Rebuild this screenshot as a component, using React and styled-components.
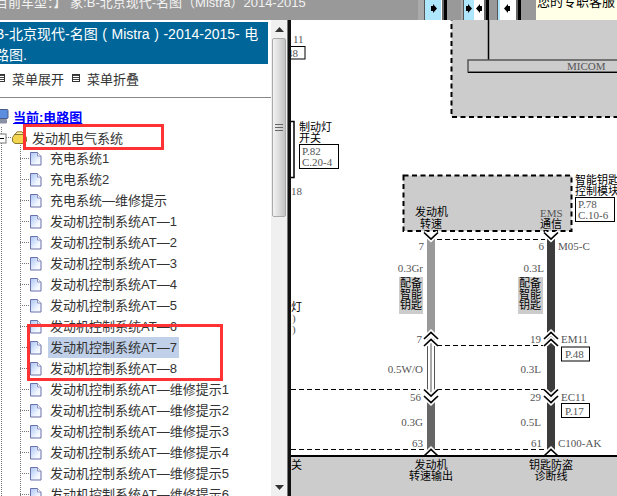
import React from 'react';
import styled, { createGlobalStyle } from 'styled-components';

const GlobalStyle = createGlobalStyle`
  html, body {
    margin: 0;
    padding: 0;
    height: 100%;
    overflow: hidden;
    background: #fff;
  }
  #root { height: 100%; }
`;

const Page = styled.div`
  display: flex;
  flex-direction: column;
  width: 617px;
  height: 496px;
  overflow: hidden;
  font-family: "Liberation Sans", "Noto Sans CJK SC", sans-serif;
`;

const TopBar = styled.div`
  display: flex;
  flex: 0 0 20px;
  height: 20px;
  background: #999;
  overflow: hidden;
`;

const CarInfo = styled.div`
  flex: 0 0 418px;
  height: 20px;
  box-sizing: border-box;
  margin-top: -7px;
  text-indent: -5px;
  font-size: 13px;
  line-height: 20px;
  color: #f2f2f2;
  white-space: nowrap;
`;

const ToolButton = styled.div`
  display: flex;
  flex: 0 0 auto;
  height: 20px;
  margin-left: ${p => p.$gap}px;
  padding-left: ${p => p.$pad}px;
  border-right: 3px solid #000;
  background: #aaa;
`;

const ToolFace = styled.div`
  display: flex;
  align-items: center;
  justify-content: space-around;
  width: ${p => p.$w}px;
  height: 20px;
  padding-bottom: 4px;
  box-sizing: border-box;
  border-left: 1px solid #555;
  border-right: 2px solid #666;
  background: linear-gradient(90deg, #aee6fb ${p => p.$blue}px, #fff ${p => p.$blue}px);
`;

const Service = styled.div`
  flex: 1;
  margin-left: 15px;
  padding-left: 1px;
  background: #ffffe8;
  color: #000;
  font-size: 13px;
  line-height: 14px;
  white-space: nowrap;
  overflow: hidden;
  span { display: block; margin-top: -5px; }
`;

const Body = styled.div`
  display: flex;
  flex: 1;
  min-height: 0;
`;

const Sidebar = styled.div`
  position: relative;
  flex: 0 0 271px;
  padding-top: 2px;
  overflow: hidden;
  background: #fff;
  color: #333;
  font-size: 13px;
`;

const Heading = styled.div`
  width: 268px;
  height: 42px;
  box-sizing: border-box;
  padding-top: 2px;
  overflow: hidden;
  background: #006699;
  color: #fff;
  font-size: 14px;
  line-height: 21px;
  word-spacing: 0.7px;
  white-space: nowrap;
`;

const HeadingText = styled.div`
  margin-left: -5px;
`;

const MenuRow = styled.div`
  display: flex;
  align-items: center;
  height: 34px;
  box-sizing: border-box;
  padding: 0 0 5px 12px;
  border-bottom: 1px solid #888;
  gap: 23px;
`;

const MenuAction = styled.span`
  position: relative;
  &::before {
    content: '';
    position: absolute;
    left: -15px;
    top: 50%;
    width: 6px;
    height: 6px;
    margin-top: -4px;
    border: 1px solid #333;
    background: repeating-linear-gradient(#444 0 1px, #fff 1px 2px);
  }
`;

const Current = styled.div`
  display: flex;
  align-items: center;
  height: 18px;
  margin-top: 9px;
  gap: 4px;
`;

const CurrentLink = styled.a`
  color: #0000ff;
  font-weight: bold;
  text-decoration: underline;
`;

const Tree = styled.div`
  position: relative;
  margin-top: 2px;
`;

const FolderRow = styled.div`
  display: flex;
  align-items: center;
  height: 21px;
  padding-left: 12px;
  gap: 5px;
`;

const LeafRow = styled.div`
  display: flex;
  align-items: center;
  height: 21px;
  padding-left: 30px;
`;

const LeafText = styled.span`
  margin-left: 6px;
  padding: 0 2px;
  line-height: 21px;
  white-space: nowrap;
  background: ${p => (p.$selected ? '#c0d0e8' : 'transparent')};
`;

const Guides = styled.svg`
  position: absolute;
  left: 0;
  top: 0;
  pointer-events: none;
`;

const RedBox = styled.div`
  position: absolute;
  left: ${p => p.$x}px;
  top: ${p => p.$y}px;
  width: ${p => p.$w}px;
  height: ${p => p.$h}px;
  box-sizing: border-box;
  border: 3px solid #ff3333;
  pointer-events: none;
`;

const Scrollbar = styled.div`
  display: flex;
  flex-direction: column;
  flex: 0 0 17px;
  box-sizing: border-box;
  border-right: 1px solid #777;
  background: #f0f0f0;
`;

const ScrollButton = styled.div`
  display: flex;
  align-items: center;
  justify-content: center;
  flex: 0 0 18px;
`;

const ScrollThumb = styled.div`
  display: flex;
  align-items: center;
  justify-content: center;
  flex: 0 0 177px;
  margin: 0 1px;
  border: 1px solid #aaa;
  border-radius: 2px;
  background: linear-gradient(90deg, #f2f2f2, #dcdcdc 50%, #c4c4c4);
`;

const ScrollTrack = styled.div`
  flex: 1;
`;

const Diagram = styled.svg`
  display: block;
  flex: 1;
  background: #fff;
`;

const Sans = styled.text`
  font-family: "Noto Sans CJK SC", "Liberation Sans", sans-serif;
  font-size: 11px;
  fill: #000;
`;

const Serif = styled.text`
  font-family: "Liberation Serif", serif;
  font-size: 11px;
  fill: #555;
`;

const items = [
  '充电系统1',
  '充电系统2',
  '充电系统—维修提示',
  '发动机控制系统AT—1',
  '发动机控制系统AT—2',
  '发动机控制系统AT—3',
  '发动机控制系统AT—4',
  '发动机控制系统AT—5',
  '发动机控制系统AT—6',
  '发动机控制系统AT—7',
  '发动机控制系统AT—8',
  '发动机控制系统AT—维修提示1',
  '发动机控制系统AT—维修提示2',
  '发动机控制系统AT—维修提示3',
  '发动机控制系统AT—维修提示4',
  '发动机控制系统AT—维修提示5',
  '发动机控制系统AT—维修提示6',
];

const PageIcon = () => (
  <svg width="12" height="14" viewBox="0 0 12 14">
    <defs>
      <linearGradient id="pg" x1="0" y1="0" x2="1" y2="1">
        <stop offset="0" stopColor="#a8c4f4" />
        <stop offset="0.7" stopColor="#f4f8ff" />
      </linearGradient>
    </defs>
    <path d="M.5 .5H7.5L11 4V13H.5Z" fill="url(#pg)" stroke="#6a70a8" />
    <path d="M7.5 .5V4H11" fill="#fff" stroke="#8a90c0" />
  </svg>
);

const FolderIcon = () => (
  <svg width="15" height="13" viewBox="0 0 15 13">
    <path d="M.5 6.5 3 3H12L14.5 6.5V10.5L12.5 12.5H3L.5 10.5Z" fill="#f2d44e" stroke="#8a7a30" />
    <path d="M3 3.5 5 .8H10L12 3.5Z" fill="#fff0a0" stroke="#8a7a30" />
  </svg>
);

const ComputerIcon = () => (
  <svg width="9" height="15" viewBox="0 0 9 15">
    <rect x="-4" y="0.5" width="12" height="9" rx="1" fill="#5c8ee0" stroke="#4a5a88" />
    <rect x="-3" y="10" width="10" height="4.5" rx="1" fill="#8a90a4" />
  </svg>
);

const Arrow = ({ dir }) => (
  <svg width="6" height="9" viewBox="0 0 6 9">
    <path d={dir === 'right' ? 'M0 2H2V0L6 4.5 2 9V7H0Z' : 'M6 2H4V0L0 4.5 4 9V7H6Z'} fill="#000" />
  </svg>
);

const Chevron = ({ x, y, up }) => {
  const d = up
    ? `M${x - 7} ${y + 6.5} L${x} ${y} L${x + 7} ${y + 6.5}`
    : `M${x - 7} ${y - 6.5} L${x} ${y} L${x + 7} ${y - 6.5}`;
  return (
    <g fill="none">
      <path d={d} stroke="#fff" strokeWidth="5" />
      <path d={d} stroke="#000" strokeWidth="1.7" />
    </g>
  );
};

const RefBox = ({ x, y, w, h, lines }) => (
  <g>
    <rect x={x + 0.5} y={y + 0.5} width={w} height={h} fill="#fff" stroke="#000" />
    {lines.map((line, i) => (
      <Serif key={line} x={x + 3} y={y + 11 + i * 11}>{line}</Serif>
    ))}
  </g>
);

const WiringDiagram = () => (
  <Diagram width="329" height="476" viewBox="288 20 329 476">
    {/* 上方 MICOM 模块 */}
    <rect x="451.5" y="10" width="200" height="107" fill="#ccc" stroke="#000" strokeWidth="2" strokeDasharray="5 3.5" />
    <line x1="488.5" y1="20" x2="488.5" y2="60" stroke="#000" strokeWidth="1.5" />
    <rect x="468" y="60" width="160" height="12" fill="#ccc" stroke="#555" strokeWidth="1.5" />
    <line x1="468" y1="72.5" x2="617" y2="72.5" stroke="#000" />
    <Serif x="567" y="70">MICOM</Serif>

    {/* 左侧截断内容 */}
    <Serif x="293" y="42.5">11</Serif>
    <rect x="286" y="46.5" width="19" height="12.5" fill="#fff" stroke="#000" />
    <Serif x="287" y="57">48</Serif>
    <rect x="286" y="121.5" width="8" height="56" fill="#fff" stroke="#000" strokeWidth="1.5" />
    <Sans x="299" y="131">制动灯</Sans>
    <Sans x="299" y="142">开关</Sans>
    <RefBox x={299} y={144} w={39} h={24} lines={['P.82', 'C.20-4']} />
    <Serif x="291" y="195">18</Serif>
    <Sans x="291" y="311">灯</Sans>
    <Serif x="292" y="322">)</Serif>
    <Serif x="292" y="333">)</Serif>

    {/* 中部模块 */}
    <rect x="403.5" y="175.5" width="168" height="55.5" fill="#ccc" stroke="#000" strokeWidth="2" strokeDasharray="5 3.5" />
    <Sans x="415" y="216">发动机</Sans>
    <Sans x="420" y="228">转速</Sans>
    <Serif x="540" y="217">EMS</Serif>
    <Sans x="540" y="228">通信</Sans>
    <Sans x="575" y="184">智能钥匙</Sans>
    <Sans x="575" y="195">控制模块</Sans>
    <RefBox x={575} y={197} w={39} h={24} lines={['P.78', 'C.10-6']} />

    {/* 线束 */}
    <rect x="427" y="236" width="8" height="97" fill="#999" />
    <rect x="427.5" y="338" width="7" height="58" fill="#fff" stroke="#555" strokeWidth="1" />
    <line x1="431" y1="338" x2="431" y2="396" stroke="#555" />
    <rect x="427" y="402" width="8" height="48" fill="#666" />
    <rect x="547" y="236" width="8" height="214" fill="#3c3c3c" />

    <Chevron x={431} y={239} />
    <Chevron x={551} y={239} />
    <path d="M437 239.5H545" stroke="#000" strokeDasharray="5 3" />

    <Serif x="424" y="250" textAnchor="end">7</Serif>
    <Serif x="544" y="250" textAnchor="end">6</Serif>
    <Serif x="558" y="250">M05-C</Serif>
    <Serif x="423" y="272" textAnchor="end">0.3Gr</Serif>
    <Serif x="544" y="272" textAnchor="end">0.3L</Serif>

    <rect x="399" y="277" width="24" height="37" fill="#ccc" />
    <rect x="518" y="277" width="25" height="37" fill="#ccc" />
    {['配备', '智能', '钥匙'].map((label, i) => (
      <g key={label}>
        <Sans x="400" y={287 + i * 11}>{label}</Sans>
        <Sans x="519" y={287 + i * 11}>{label}</Sans>
      </g>
    ))}

    <Chevron x={431} y={332.5} up />
    <Chevron x={431} y={339.5} up />
    <Chevron x={551} y={332.5} up />
    <Chevron x={551} y={339.5} up />
    <Serif x="422" y="343" textAnchor="end">7</Serif>
    <Serif x="541" y="343" textAnchor="end">19</Serif>
    <Serif x="561" y="343">EM11</Serif>
    <rect x="561.5" y="347" width="28" height="14" fill="#fff" stroke="#000" />
    <Serif x="565" y="358">P.48</Serif>
    <path d="M437 345.5H543" stroke="#000" strokeDasharray="5 3" />

    <Serif x="423" y="373" textAnchor="end">0.5W/O</Serif>
    <Serif x="541" y="373" textAnchor="end">0.3L</Serif>

    <path d="M291 389.5H420M437 389.5H545" stroke="#000" strokeDasharray="5 3" />
    <Chevron x={431} y={396} />
    <Chevron x={431} y={402.5} />
    <Chevron x={551} y={396} />
    <Chevron x={551} y={402.5} />
    <Serif x="421" y="401" textAnchor="end">56</Serif>
    <Serif x="541" y="401" textAnchor="end">29</Serif>
    <Serif x="561" y="401">EC11</Serif>
    <rect x="561.5" y="403.5" width="28" height="14" fill="#fff" stroke="#000" />
    <Serif x="565" y="414.5">P.17</Serif>

    <Serif x="423" y="426" textAnchor="end">0.3G</Serif>
    <Serif x="541" y="426" textAnchor="end">0.5L</Serif>
    <Serif x="423" y="447" textAnchor="end">63</Serif>
    <Serif x="542" y="447" textAnchor="end">61</Serif>
    <Serif x="558" y="447">C100-AK</Serif>
    <path d="M291 449.5H545" stroke="#000" strokeDasharray="5 3" />

    {/* 底部模块 */}
    <rect x="291" y="456" width="326" height="40" fill="#ccc" />
    <Chevron x={431} y={449.5} up />
    <Chevron x={551} y={449.5} up />
    <line x1="291" y1="456" x2="617" y2="456" stroke="#000" strokeWidth="2" />
    <Sans x="291" y="469">关</Sans>
    <Sans x="431" y="469" textAnchor="middle">发动机</Sans>
    <Sans x="431" y="480" textAnchor="middle">转速输出</Sans>
    <Sans x="551" y="469" textAnchor="middle">钥匙防盗</Sans>
    <Sans x="551" y="480" textAnchor="middle">诊断线</Sans>

    {/* 左边框压在截断内容之上 */}
    <rect x="288" y="20" width="3" height="476" fill="#111" />
  </Diagram>
);

const App = () => (
  <>
    <GlobalStyle />
    <Page>
      <TopBar>
        <CarInfo>目前车型：】 家:B-北京现代-名图（Mistra）2014-2015</CarInfo>
        <ToolButton $gap={0} $pad={6}>
          <ToolFace $w={20} $blue={16}><Arrow dir="right" /></ToolFace>
        </ToolButton>
        <ToolButton $gap={14} $pad={2}>
          <ToolFace $w={23} $blue={10}><Arrow dir="right" /><Arrow dir="left" /></ToolFace>
        </ToolButton>
        <ToolButton $gap={8} $pad={0}>
          <ToolFace $w={21} $blue={2}><Arrow dir="left" /></ToolFace>
        </ToolButton>
        <Service><span>您的专职客服</span></Service>
      </TopBar>
      <Body>
        <Sidebar>
          <Heading>
            <HeadingText>
              B-北京现代-名图 ( Mistra ) -2014-2015- 电<br />路图.
            </HeadingText>
          </Heading>
          <MenuRow>
            <MenuAction>菜单展开</MenuAction>
            <MenuAction>菜单折叠</MenuAction>
          </MenuRow>
          <Current>
            <ComputerIcon />
            <CurrentLink>当前:电路图</CurrentLink>
          </Current>
          <Tree>
            <FolderRow>
              <FolderIcon />
              <span>发动机电气系统</span>
            </FolderRow>
            {items.map((item, i) => (
              <LeafRow key={item}>
                <PageIcon />
                <LeafText $selected={i === 9}>{item}</LeafText>
              </LeafRow>
            ))}
            <Guides width="271" height="380">
              <path d="M20.5 18V380M1.5 0V380" stroke="#777" strokeDasharray="1 1" fill="none" />
              <path d="M0 10.5H12" stroke="#777" strokeDasharray="1 1" />
              {items.map((item, i) => (
                <path key={item} d={`M20 ${31.5 + i * 21}H30`} stroke="#777" strokeDasharray="1 1" />
              ))}
              <rect x="-3" y="7" width="9" height="9" fill="#fff" stroke="#777" />
              <path d="M-1 11.5H4" stroke="#000" />
            </Guides>
          </Tree>
          <RedBox $x={23} $y={104} $w={141} $h={26} />
          <RedBox $x={27} $y={304} $w={196} $h={57} />
        </Sidebar>
        <Scrollbar>
          <ScrollButton>
            <svg width="9" height="5" viewBox="0 0 9 5"><path d="M4.5 0 9 5H0Z" fill="#333" /></svg>
          </ScrollButton>
          <ScrollThumb>
            <svg width="8" height="9" viewBox="0 0 8 9"><path d="M0 1.5H8M0 4.5H8M0 7.5H8" stroke="#666" /></svg>
          </ScrollThumb>
          <ScrollTrack />
          <ScrollButton>
            <svg width="9" height="5" viewBox="0 0 9 5"><path d="M0 0H9L4.5 5Z" fill="#333" /></svg>
          </ScrollButton>
        </Scrollbar>
        <WiringDiagram />
      </Body>
    </Page>
  </>
);

export default App;
